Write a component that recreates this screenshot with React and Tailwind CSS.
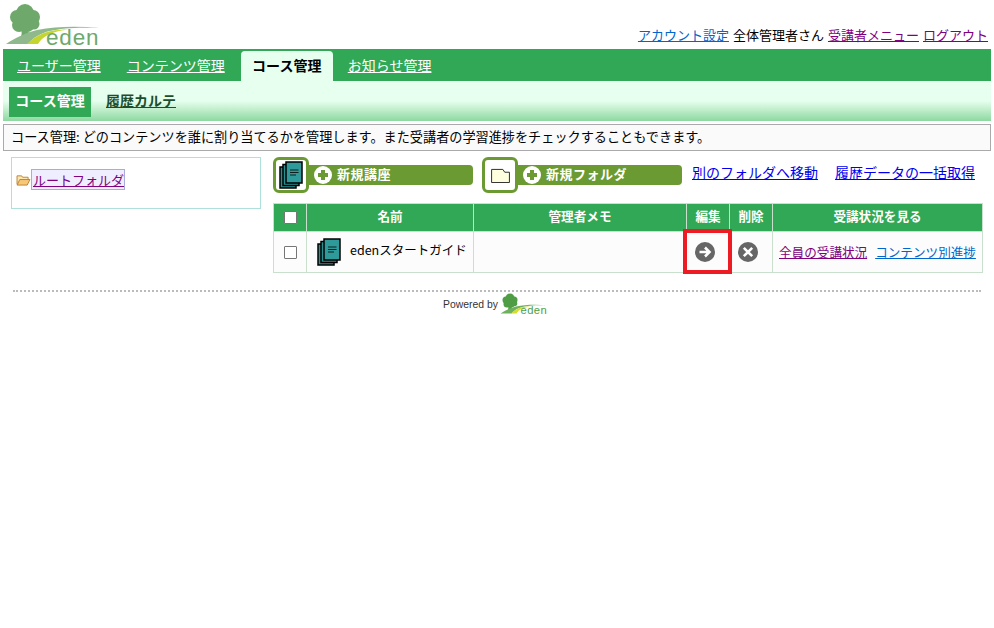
function Logo({ className, tree = "#6fa86b", swoosh = "#8fb98c", lime = "#c4d62e", text = "#6fa86b" }) {
  return (
    <svg viewBox="3 1 100 48" className={className}>
      <g fill={tree}>
        <circle cx="25" cy="13" r="9" />
        <circle cx="17" cy="17" r="7" />
        <circle cx="33" cy="17" r="7" />
        <circle cx="19" cy="25" r="7" />
        <circle cx="27" cy="24" r="8" />
        <circle cx="34" cy="24" r="5.500" />
        <path d="M21 28h7l1 6 4 1-13 4c2-4 2-7 1-11z" />
      </g>
      <path d="M6 44C15 38 25 33 37 30c20-4 42-4 63-2-22-1-38 0-50 3-9 2-16 6-22 13H6z" fill={swoosh} />
      <path d="M27 44c6-6 14-11 24-13 6-1 11-1.500 17-1.500-9 1-15 3-21 6-4 2-7 5-9 8.500z" fill={lime} />
      <text x="46" y="45" fontFamily="'Liberation Sans',sans-serif" fontSize="22.500" letterSpacing="0.800" fill={text}>eden</text>
    </svg>
  );
}

function Books({ className }) {
  return (
    <svg viewBox="0 0 24 28" className={className}>
      <rect x="1" y="6" width="16" height="21" fill="#2b8f8f" stroke="#000" strokeWidth="1.500" />
      <rect x="4" y="3.500" width="16" height="21" fill="#2b8f8f" stroke="#000" strokeWidth="1.500" />
      <rect x="7" y="1" width="16" height="21" fill="#2f9a9a" stroke="#000" strokeWidth="1.500" />
      <path d="M11 9h8.500M11 11.500h8.500M11 14h6" stroke="#102020" strokeWidth="1.100" />
    </svg>
  );
}

function Plus() {
  return (
    <svg viewBox="0 0 18 18" className="w-[18px] h-[18px] shrink-0">
      <circle cx="9" cy="9" r="9" fill="#fff" />
      <path d="M9 4v10M4 9h10" stroke="#6b9a33" strokeWidth="4" />
    </svg>
  );
}

function ActionButton({ icon, label }) {
  return (
    <div className="flex items-center">
      <div className="w-9 h-9 border-[3px] border-[#6b9a33] rounded-md bg-white flex items-center justify-center shrink-0">{icon}</div>
      <div className="w-[164px] h-5 bg-[#6b9a33] rounded-r flex items-center pl-[5px] gap-[5px] text-white font-bold text-[13px] tracking-[0.5px]">
        <Plus />
        <span className="-mt-[2px]">{label}</span>
      </div>
    </div>
  );
}

export default function App() {
  return (
    <div className="w-[994px] h-[628px] bg-white px-[3px] text-[13px] text-black overflow-hidden" style={{ fontFamily: "'Noto Sans CJK JP','Liberation Sans',sans-serif" }}>
      <header className="h-[49px] flex justify-between items-end">
        <Logo className="w-[100px] h-[48px]" />
        <div className="flex gap-[4px] mr-[3px] mb-[5px] leading-[18px] whitespace-nowrap">
          <a href="#a" className="text-[#0066cc] underline">アカウント設定</a>
          <span>全体管理者さん</span>
          <a href="#b" className="text-[#800080] underline">受講者メニュー</a>
          <a href="#c" className="text-[#800080] underline">ログアウト</a>
        </div>
      </header>

      <nav className="h-8 bg-[#31a855] flex items-end pl-[14px] text-sm">
        <a href="#d" className="h-[30px] leading-[29px] text-white underline">ユーザー管理</a>
        <a href="#e" className="h-[30px] leading-[29px] ml-[26px] text-white underline">コンテンツ管理</a>
        <div className="h-[30px] w-[92px] ml-[16px] text-center leading-[28px] font-bold bg-[#e6ffee] rounded-t">コース管理</div>
        <a href="#f" className="h-[30px] leading-[29px] ml-[15px] text-white underline">お知らせ管理</a>
      </nav>

      <div className="h-10 pt-[6px] pl-[6px] flex gap-[15px] text-sm font-bold bg-gradient-to-b from-[#e6ffee] from-50% to-[#8dd8a0]">
        <div className="w-[82px] h-[30px] bg-[#31a855] text-white text-center leading-[26px]">コース管理</div>
        <a href="#g" className="h-[30px] leading-[26px] text-[#1d4d2c] underline">履歴カルテ</a>
      </div>

      <div className="mt-[3px] h-[27px] border border-[#aaaaaa] bg-[#fafafa] pl-[7px] text-[13.150px] leading-[23px] whitespace-nowrap">
        コース管理: どのコンテンツを誰に割り当てるかを管理します。また受講者の学習進捗をチェックすることもできます。
      </div>

      <main className="mt-[6px] flex pl-2">
        <aside className="w-[250px] h-[52px] border border-[#aee0dc] pt-[11px] pl-[4px] flex items-start shrink-0">
          <svg viewBox="0 0 16 13" className="w-[15px] h-[12px] mt-[5px] shrink-0">
            <path d="M1 11V2h5l1 1.500h6V6" fill="#fde6b0" stroke="#b9802f" />
            <path d="M1 12l3-6h11l-3 6z" fill="#f6c878" stroke="#b9802f" />
          </svg>
          <a href="#h" className="h-[21px] pl-[1px] leading-[20px] border border-[#aaaadd] bg-[#eeeeff] text-[#800080] underline">ルートフォルダ</a>
        </aside>

        <section className="ml-3 w-[710px]">
          <div className="flex items-center h-9">
            <ActionButton icon={<Books className="w-[24px] h-[28px]" />} label="新規講座" />
            <div className="ml-[9px]">
              <ActionButton
                icon={
                  <svg viewBox="0 0 20 16" className="w-[19px] h-[15px]">
                    <path d="M0.500 15.500V1.500h12l2 3h5v11z" fill="#ffffe0" stroke="#222" strokeWidth="1" />
                  </svg>
                }
                label="新規フォルダ"
              />
            </div>
            <a href="#i" className="ml-[10px] text-sm text-[#0000ee] underline whitespace-nowrap -mt-[6px]">別のフォルダへ移動</a>
            <a href="#j" className="ml-[17px] text-sm text-[#0000ee] underline whitespace-nowrap -mt-[6px]">履歴データの一括取得</a>
          </div>

          <div className="relative mt-[10px]">
            <table className="w-[710px] table-fixed border-collapse">
              <colgroup>
                <col className="w-[33px]" />
                <col className="w-[167px]" />
                <col className="w-[213px]" />
                <col className="w-[43px]" />
                <col className="w-[43px]" />
                <col />
              </colgroup>
              <thead>
                <tr className="h-[28px] bg-[#31a855] text-white text-[12.600px] font-bold">
                  <th className="border border-[#c8e0cc]">
                    <span className="block w-[13px] h-[13px] mx-auto bg-white border border-[#767676] rounded-[1px]" />
                  </th>
                  <th className="border border-[#c8e0cc] pb-[3px]">名前</th>
                  <th className="border border-[#c8e0cc] pb-[3px]">管理者メモ</th>
                  <th className="border border-[#c8e0cc] pb-[3px]">編集</th>
                  <th className="border border-[#c8e0cc] pb-[3px]">削除</th>
                  <th className="border border-[#c8e0cc] pb-[3px]">受講状況を見る</th>
                </tr>
              </thead>
              <tbody>
                <tr className="h-[41px] bg-[#fcfcfc]">
                  <td className="border border-[#c8e0cc]">
                    <span className="block w-[13px] h-[13px] mx-auto bg-white border border-[#767676] rounded-[1px]" />
                  </td>
                  <td className="border border-[#c8e0cc] pl-[10px]">
                    <div className="flex items-center gap-[9px]">
                      <Books className="w-[24px] h-[28px]" />
                      <span className="-mt-[4px] text-[12.500px] whitespace-nowrap">edenスタートガイド</span>
                    </div>
                  </td>
                  <td className="border border-[#c8e0cc]" />
                  <td className="border border-[#c8e0cc]">
                    <svg viewBox="0 0 20 20" className="w-5 h-5 ml-[8px]">
                      <circle cx="10" cy="10" r="10" fill="#666" />
                      <path d="M4.500 10h9M10 5.500l4.500 4.500-4.500 4.500" fill="none" stroke="#fff" strokeWidth="2.600" />
                    </svg>
                  </td>
                  <td className="border border-[#c8e0cc]">
                    <svg viewBox="0 0 20 20" className="w-5 h-5 ml-[8px]">
                      <circle cx="10" cy="10" r="10" fill="#666" />
                      <path d="M5.800 5.800l8.400 8.400M14.200 5.800l-8.400 8.400" fill="none" stroke="#fff" strokeWidth="2.600" />
                    </svg>
                  </td>
                  <td className="border border-[#c8e0cc] pl-[6px] text-[12.600px] whitespace-nowrap">
                    <a href="#k" className="text-[#800080] underline">全員の受講状況</a>
                    <a href="#l" className="ml-2 text-[#0066cc] underline">コンテンツ別進捗</a>
                  </td>
                </tr>
              </tbody>
            </table>
            <div className="absolute left-[410px] top-[26px] w-[49px] h-[45px] border-[4px] border-[#ed1c24]" />
          </div>
        </section>
      </main>

      <footer className="mt-[17px] mx-[10px] border-t-2 border-dotted border-[#bbbbbb] w-[968px] flex justify-center items-start">
        <span className="text-[10.400px] mt-[5px] -ml-[2px] text-[#333]" style={{ fontFamily: "'Liberation Sans',sans-serif" }}>Powered by</span>
        <Logo className="w-[50px] h-[24px] ml-[1px]" tree="#4f9e45" swoosh="#6fb05f" lime="#d3de2c" text="#4f9e45" />
      </footer>
    </div>
  );
}
